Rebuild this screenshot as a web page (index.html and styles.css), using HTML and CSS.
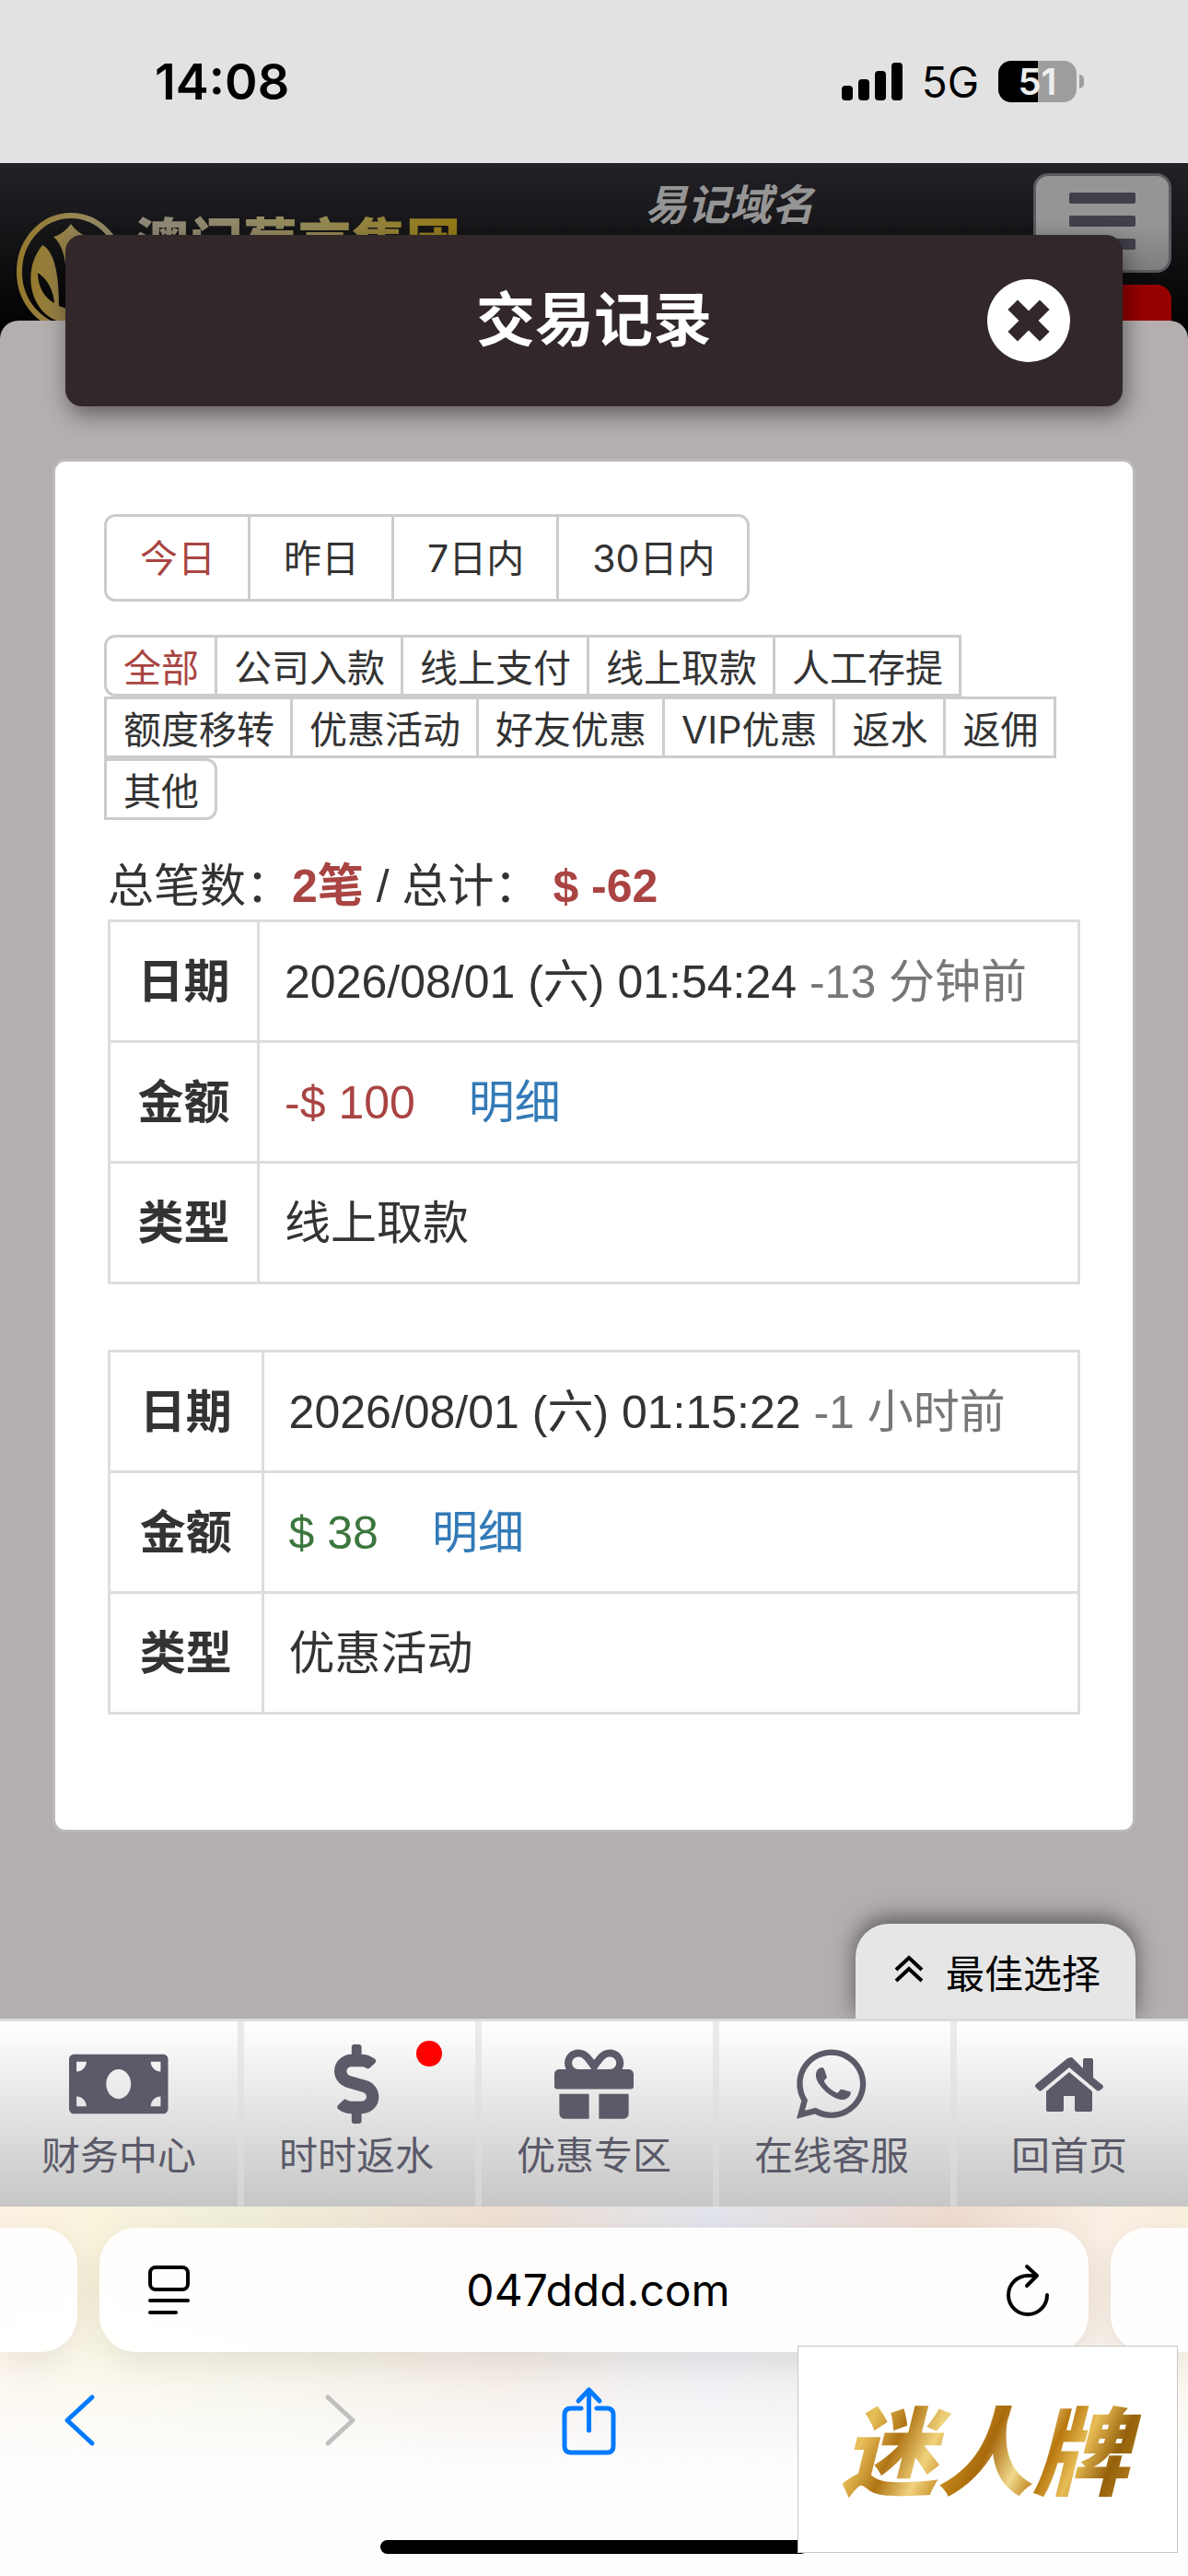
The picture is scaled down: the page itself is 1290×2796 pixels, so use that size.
FILE: index.html
```html
<!DOCTYPE html>
<html lang="zh-CN">
<head>
  <meta charset="utf-8" />
  <title>交易记录</title>
  <meta name="viewport" content="width=device-width, initial-scale=1" />
  <link rel="stylesheet" href="styles.css">
</head>
<body>
  <!-- Status bar -->
  <div class="status">
    <time class="clock">14:08</time>
    <div class="status-right">
      <svg class="signal" viewBox="0 0 66 41" aria-hidden="true">
        <rect x="0" y="25" width="12" height="16" rx="4"/><rect x="18" y="18" width="12" height="23" rx="4"/><rect x="36" y="9" width="12" height="32" rx="4"/><rect x="54" y="0" width="12" height="41" rx="4"/>
      </svg>
      <span class="network">5G</span>
      <span class="battery">51</span>
    </div>
  </div>

  <!-- Site header -->
  <header class="topbar">
    <div class="brand">
      <svg viewBox="0 0 120 128" aria-hidden="true">
        <defs>
          <linearGradient id="gold" x1="0" x2="1"><stop offset="0" stop-color="#957a2e"/><stop offset="1" stop-color="#958e72"/></linearGradient>
        </defs>
        <ellipse cx="59" cy="64" rx="56" ry="61" fill="none" stroke="url(#gold)" stroke-width="6"/>
        <path fill="url(#gold)" d="M59 12C54 19 48 24 40 26C49 33 53 48 54 66L64 66C65 48 69 33 78 26C70 24 64 19 59 12zM28 35C17 49 14 64 16 80C20 105 38 120 59 120C80 120 98 105 102 80C104 64 101 49 90 35C78 43 72 70 72 101C63 105 55 105 46 101C46 70 42 42 28 35zM23 65C34 72 40 85 41 98C30 92 23 80 23 65z"/>
      </svg>
      <span>澳门葡京集团</span>
    </div>
    <a class="domain" href="#">易记域名</a>
    <div class="top-actions">
      <button class="menu" aria-label="菜单"><i></i><i></i><i></i></button>
      <button class="red" aria-label="登录"></button>
    </div>
  </header>

  <main class="sheet">
    <div class="modal-head">
      <h1>交易记录</h1>
      <button class="close" aria-label="关闭">
        <svg viewBox="0 0 90 90"><circle cx="45" cy="45" r="45" fill="#fff"/><path d="M33 33L57 57M57 33L33 57" stroke="#322829" stroke-width="15" stroke-linecap="square" stroke-linejoin="round"/></svg>
      </button>
    </div>

    <section class="card">
      <div class="days">
        <button class="active">今日</button><button>昨日</button><button>7日内</button><button>30日内</button>
      </div>
      <div class="types">
        <button class="active">全部</button><button>公司入款</button><button>线上支付</button><button>线上取款</button><button>人工存提</button>
        <button>额度移转</button><button>优惠活动</button><button>好友优惠</button><button>VIP优惠</button><button>返水</button><button>返佣</button>
        <button>其他</button>
      </div>

      <div class="records">
        <p class="summary">总笔数：<b>2笔</b> / 总计： <b>$ -62</b></p>
        <table>
          <tr><th scope="row">日期</th><td>2026/08/01 (六) 01:54:24 <span class="muted">-13 分钟前</span></td></tr>
          <tr><th scope="row">金额</th><td><span class="minus">-$ 100</span><a href="#">明细</a></td></tr>
          <tr><th scope="row">类型</th><td>线上取款</td></tr>
        </table>
        <table>
          <tr><th scope="row">日期</th><td>2026/08/01 (六) 01:15:22 <span class="muted">-1 小时前</span></td></tr>
          <tr><th scope="row">金额</th><td><span class="plus">$ 38</span><a href="#">明细</a></td></tr>
          <tr><th scope="row">类型</th><td>优惠活动</td></tr>
        </table>
      </div>
    </section>

    <button class="best">
      <svg viewBox="0 0 32 30" aria-hidden="true"><path d="M2 16L16 3L30 16M2 28L16 15L30 28" fill="none" stroke="#000" stroke-width="4"/></svg>
      最佳选择
    </button>
  </main>

  <!-- Bottom menu -->
  <nav class="bottom-nav">
    <a href="#">
      <svg viewBox="0 0 640 512"><path d="M608 64H32C14.33 64 0 78.33 0 96v320c0 17.67 14.33 32 32 32h576c17.67 0 32-14.33 32-32V96c0-17.67-14.33-32-32-32zM48 400v-64c35.35 0 64 28.65 64 64H48zm0-224v-64h64c0 35.35-28.65 64-64 64zm272 176c-44.19 0-80-42.99-80-96 0-53.02 35.82-96 80-96s80 42.98 80 96c0 53.03-35.83 96-80 96zm272 48h-64c0-35.35 28.65-64 64-64v64zm0-224c-35.35 0-64-28.65-64-64h64v64z"/></svg>
      财务中心
    </a>
    <a href="#">
      <svg viewBox="0 0 288 512"><path d="M209.2 233.4l-108-31.6C88.7 198.2 80 186.5 80 173.5c0-16.3 13.2-29.5 29.5-29.5h66.3c12.2 0 24.2 3.7 34.2 10.5 6.1 4.1 14.3 3.1 19.5-2l34.8-34c7.1-6.9 6.1-18.4-1.8-24.5C238 74.8 207.4 64.1 176 64V16c0-8.8-7.2-16-16-16h-32c-8.8 0-16 7.2-16 16v48h-2.5C45.8 64-5.4 118.7.5 183.6c4.2 46.1 39.4 83.6 83.8 96.6l102.5 30c12.5 3.7 21.2 15.3 21.2 28.3 0 16.3-13.2 29.5-29.5 29.5h-66.3C100 368 88 364.3 78 357.5c-6.1-4.1-14.3-3.1-19.5 2l-34.8 34c-7.1 6.9-6.1 18.4 1.8 24.5 24.5 19.2 55.1 29.9 86.5 30v48c0 8.8 7.2 16 16 16h32c8.8 0 16-7.2 16-16v-48.2c46.6-.9 90.3-28.6 105.7-72.7 21.5-61.6-14.6-124.8-72.5-141.7z"/></svg>
      时时返水
      <span class="dot"></span>
    </a>
    <a href="#">
      <svg viewBox="0 0 512 512"><path d="M32 448c0 17.7 14.3 32 32 32h160V320H32v128zm256 32h160c17.7 0 32-14.3 32-32V320H288v160zm192-320h-42.1c6.2-12.1 10.1-25.5 10.1-40 0-48.5-39.5-88-88-88-41.6 0-68.5 21.3-103 68.3-34.5-47-61.4-68.3-103-68.3-48.5 0-88 39.5-88 88 0 14.5 3.8 27.9 10.1 40H32c-17.7 0-32 14.3-32 32v80c0 8.8 7.2 16 16 16h480c8.8 0 16-7.2 16-16v-80c0-17.7-14.3-32-32-32zm-326.1 0c-22.1 0-40-17.9-40-40s17.9-40 40-40c19.9 0 34.6 3.3 86.1 80h-86.1zm206.1 0h-86.1c51.4-76.5 65.7-80 86.1-80 22.1 0 40 17.9 40 40s-17.9 40-40 40z"/></svg>
      优惠专区
    </a>
    <a href="#">
      <svg viewBox="0 0 448 512"><path d="M380.9 97.1C339 55.1 283.2 32 223.9 32c-122.4 0-222 99.6-222 222 0 39.1 10.2 77.3 29.6 111L0 480l117.7-30.9c32.4 17.7 68.9 27 106.1 27h.1c122.3 0 224.1-99.6 224.1-222 0-59.3-25.2-115-67.1-157zm-157 341.6c-33.2 0-65.7-8.9-94-25.7l-6.7-4-69.8 18.3L72 359.2l-4.4-7c-18.5-29.4-28.2-63.3-28.2-98.2 0-101.7 82.8-184.5 184.6-184.5 49.3 0 95.6 19.2 130.4 54.1 34.8 34.9 56.2 81.2 56.1 130.5 0 101.8-84.9 184.6-186.6 184.6zm101.2-138.2c-5.5-2.8-32.8-12.1-38-10.2-5.1 1.9-8.8 8-12.5 13-4 5-10.5 12-16 9-32.6-16.3-58-34-79.5-71-5.7-9.8 7-14 15-26 2.500-4 .9-8.500-.5-12-1.400-2.800-10-30.100-14.600-41.200-4.500-10.800-9.100-11.300-12.500-11.500-6 0-12 0-18 2-12 5-25 22-24 48 1 27.300 19.900 53.700 22.600 57.400 2.800 3.700 39.100 59.700 94.800 83.800 35.200 15.200 49 16.500 66.600 13.900 10.700-1.600 32.800-13.400 37.400-26.400 4.600-13 4.600-20.100 3.200-22.400-3-3-12-5-24-6.400z"/></svg>
      在线客服
    </a>
    <a href="#">
      <svg viewBox="0 0 74 86"><path d="M37 15Q39 13 41 15L52 26V17Q52 15 54 15H61Q63 15 63 17V36L73 44Q75 46 73 48L70 50Q69 51 67 50L37 25L7 50Q5 51 4 50L1 47Q-1 45 1 43L34 16Q37 13 40 16z"/><path d="M37 30L62 51V71Q62 73 60 73H45Q43 73 43 71V56H31V71Q31 73 29 73H14Q12 73 12 71V51z"/></svg>
      回首页
    </a>
  </nav>

  <!-- Browser bar -->
  <footer class="browser">
    <div class="url-row">
      <div class="stub left"></div>
      <div class="url">
        <button aria-label="页面设置"><svg viewBox="0 0 46 56"><g fill="none" stroke="#000" stroke-width="4"><rect x="3" y="3" width="41" height="24" rx="6"/><path stroke-linecap="round" d="M3 39H44M3 52H31"/></g></svg></button>
        <span>047ddd.com</span>
        <button aria-label="刷新"><svg viewBox="0 0 46 56"><path d="M44 33A21 21 0 1 1 23 12H33M22 2L33 12L22 23" fill="none" stroke="#000" stroke-width="4" stroke-linecap="round" stroke-linejoin="round"/></svg></button>
      </div>
      <div class="stub right"></div>
    </div>
    <div class="tools">
      <button aria-label="后退"><svg viewBox="0 0 56 76"><path d="M40 13L13 38L40 63" stroke="#007aff"/></svg></button>
      <button aria-label="前进"><svg viewBox="0 0 56 76"><path d="M18 13L45 38L18 63" stroke="#bfbfbf"/></svg></button>
      <button aria-label="分享"><svg viewBox="0 0 56 76"><path d="M16 25H5Q-2 25 -2 32V66Q-2 73 5 73H44Q51 73 51 66V32Q51 25 44 25H33M24.500 49V6M13 17L24.500 5L36 17" stroke="#007aff"/></svg></button>
      <button aria-label="书签"></button>
      <button aria-label="标签页"></button>
    </div>
    <div class="home-bar"></div>
    <a class="ad" href="#"><span>迷人牌</span></a>
  </footer>
</body>
</html>
```
FILE: styles.css
```css
:root {
  --ink:#333;
  --red:#a94442;
  --line:#ccc;
  --slate:#5b5a69;
  --sheet:#b4aeae;
  --dark:#322829;
}

*{box-sizing:border-box;margin:0;padding:0}
body{
  font-family:"Liberation Sans","Noto Sans CJK SC",sans-serif;
  color:var(--ink);background:var(--sheet);
  min-height:100vh;display:flex;flex-direction:column;
}
button{font:inherit;color:inherit;border:none;background:none;cursor:pointer}
a{text-decoration:none}
svg{display:block;overflow:visible}

/* status bar */
.status{
  display:flex;justify-content:space-between;align-items:center;
  height:177px;padding:0 113px 0 168px;
  background:#e2e2e2;color:#000;font-family:Inter,sans-serif;
}
.clock{font-size:54px;font-weight:600}
.status-right{display:flex;align-items:center;gap:21px}
.signal{width:66px;height:41px}
.network{font-size:46px}
.battery{
  position:relative;width:85px;height:45px;border-radius:14px;
  background:linear-gradient(90deg,#000 51%,#9e9e9e 51%);
  color:#eee;font-size:40px;font-weight:600;line-height:45px;text-align:center;
  margin-right:8px;
}
.battery::after{
  content:"";position:absolute;left:88px;top:15px;width:5px;height:15px;
  border-radius:0 5px 5px 0;background:#9e9e9e;
}

/* site header */
.topbar{
  display:flex;align-items:flex-start;
  height:191px;padding:11px 18px 0;overflow:hidden;
  background:linear-gradient(#232227,#000);
}
.brand{display:flex;align-items:flex-start;gap:8px;margin-top:43px}
.brand svg{width:120px;height:128px}
.brand span{
  font-family:"Noto Sans CJK SC",sans-serif;font-size:59px;font-weight:900;line-height:60px;
  background:linear-gradient(90deg,#8e897b,#958a58 55%,#957a14);
  -webkit-background-clip:text;background-clip:text;color:transparent;
}
.domain{
  flex:1;text-align:center;margin-right:38px;
  color:#959595;font-size:46px;font-weight:700;font-style:italic;line-height:70px;
}
.top-actions{display:flex;flex-direction:column;gap:13px}
.menu{
  display:flex;flex-direction:column;align-items:center;gap:13px;
  width:150px;height:108px;padding-top:18px;
  border:3px solid #5a5a60;border-radius:16px;
  background:linear-gradient(#959595 50%,#7e7e7e);
}
.menu i{width:72px;height:12px;border-radius:2px;background:#40404b}
.red{width:150px;height:90px;border-radius:16px;background:#960000}

/* sheet and its title */
.sheet{
  position:relative;flex:1;display:flex;flex-direction:column;
  margin-top:-20px;background:var(--sheet);border-radius:20px 20px 0 0;
}
.modal-head{
  display:grid;grid-template-columns:90px 1fr 90px;align-items:center;
  height:186px;margin:-93px 71px 0;padding:0 57px;
  background:var(--dark);border-radius:18px;
  box-shadow:3px 9px 24px rgba(0,0,0,.45);
}
.modal-head h1{
  grid-column:2;text-align:center;color:#fff;
  font-size:64px;font-weight:700;line-height:80px;
}
.close svg{width:90px;height:90px}

/* card */
.card{
  margin:57px 57px 0;padding:57px 53px;
  background:#fff;border:3px solid #bcb9b9;border-radius:14px;
}
.days,.types{display:flex;flex-wrap:wrap;font-family:Inter,"Noto Sans CJK SC",sans-serif;font-size:41px}
.types{margin-top:36px}
.days button,.types button{
  background:#fff;border:3px solid var(--line);margin-right:-3px;
}
.days button{height:95px;padding:0 35px 6px 36px}
.types button{height:67px;padding:0 17px 4px 18px}
.days .active,.types .active{color:var(--red)}
.days button:first-child,.types button:first-child{border-radius:12px 0 0 12px}
.days button:last-child,.types button:last-child{border-radius:0 12px 12px 0}

.records{padding:0 4px;font-size:50px}
.summary{margin-top:36px;line-height:72px}
.summary b{color:var(--red)}
table{width:100%;border-collapse:collapse;margin-bottom:71px}
th,td{border:3px solid #ddd;height:131px;padding:0 27px 8px;text-align:left;white-space:nowrap}
th{text-align:center}
.muted{color:#777}
.minus{color:var(--red)}
.plus{color:#3c763d}
td a{color:#337ab7;margin-left:58px}
table:last-child{margin-bottom:68px}

.best{
  display:flex;align-items:center;gap:24px;
  margin:auto 57px 0 auto;height:103px;padding:0 38px 0 42px;
  background:#e6e6e6;color:#000;font-size:42px;border-radius:36px 36px 0 0;
  box-shadow:0 -6px 24px rgba(0,0,0,.5);
}
.best svg{width:32px;height:30px;margin-bottom:6px}

/* bottom menu */
.bottom-nav{
  position:relative;display:grid;grid-template-columns:repeat(5,1fr);
  height:204px;border-top:3px solid #dcdcdc;
  background:linear-gradient(#fff,#c6c6c6);
}
.bottom-nav a{
  position:relative;display:flex;flex-direction:column;align-items:center;gap:4px;
  padding-top:25px;color:var(--slate);font-size:42px;line-height:64px;
}
.bottom-nav a + a{box-shadow:inset 7px 0 0 rgba(222,222,222,.6)}
.bottom-nav svg{height:86px;fill:var(--slate)}
.dot{position:absolute;top:21px;right:36px;width:28px;height:28px;border-radius:50%;background:red}

/* browser bar */
.browser{
  position:relative;height:401px;padding-top:23px;
  background:
    linear-gradient(rgba(255,255,255,0) 90px,#fdfdfd 280px),
    linear-gradient(90deg,#fcf1e2,#f9f3dc 8%,#f1efd9 20%,#eedfd2 42%,#e2e4ec 60%,#eedacf 80%,#faefe4 93%,#f8eedc);
}
.url-row{display:flex;gap:24px;height:135px}
.stub,.url{background:rgba(255,255,255,.92);box-shadow:0 12px 36px rgba(0,0,0,.08)}
.stub{width:84px}
.left{border-radius:0 40px 40px 0}
.right{border-radius:40px 0 0 40px}
.url{
  flex:1;display:flex;justify-content:space-between;align-items:center;
  padding:0 43px 0 52px;border-radius:40px;
  color:#000;font-family:Inter,sans-serif;font-size:48px;
}
.url svg{width:46px;height:56px}
.tools{display:flex;justify-content:space-between;padding:0 64px 0 60px;margin-top:36px}
.tools button{width:56px;height:76px}
.tools svg{width:56px;height:76px}
.tools path{fill:none;stroke-width:5;stroke-linecap:round;stroke-linejoin:round}
.home-bar{width:36%;height:15px;margin:92px auto 0;border-radius:8px;background:#000}

/* floating ad */
.ad{
  position:absolute;right:11px;top:151px;width:413px;height:225px;
  display:flex;align-items:center;justify-content:center;
  background:#fff;border:1px solid #c8c8c8;
}
.ad span{
  font-family:"Noto Sans CJK SC",sans-serif;font-size:104px;font-weight:900;font-style:italic;
  line-height:120px;padding:0 14px 8px 8px;
  background:linear-gradient(115deg,#a8780f,#e8c05a 14%,#b07414 24%,#f0d27c 34%,#c08418 43%,#a8690c 50%,#f0d88c 60%,#b8780f 68%,#e8bd55 76%,#94600a 86%,#c8952c);
  -webkit-background-clip:text;background-clip:text;color:transparent;
}
```
